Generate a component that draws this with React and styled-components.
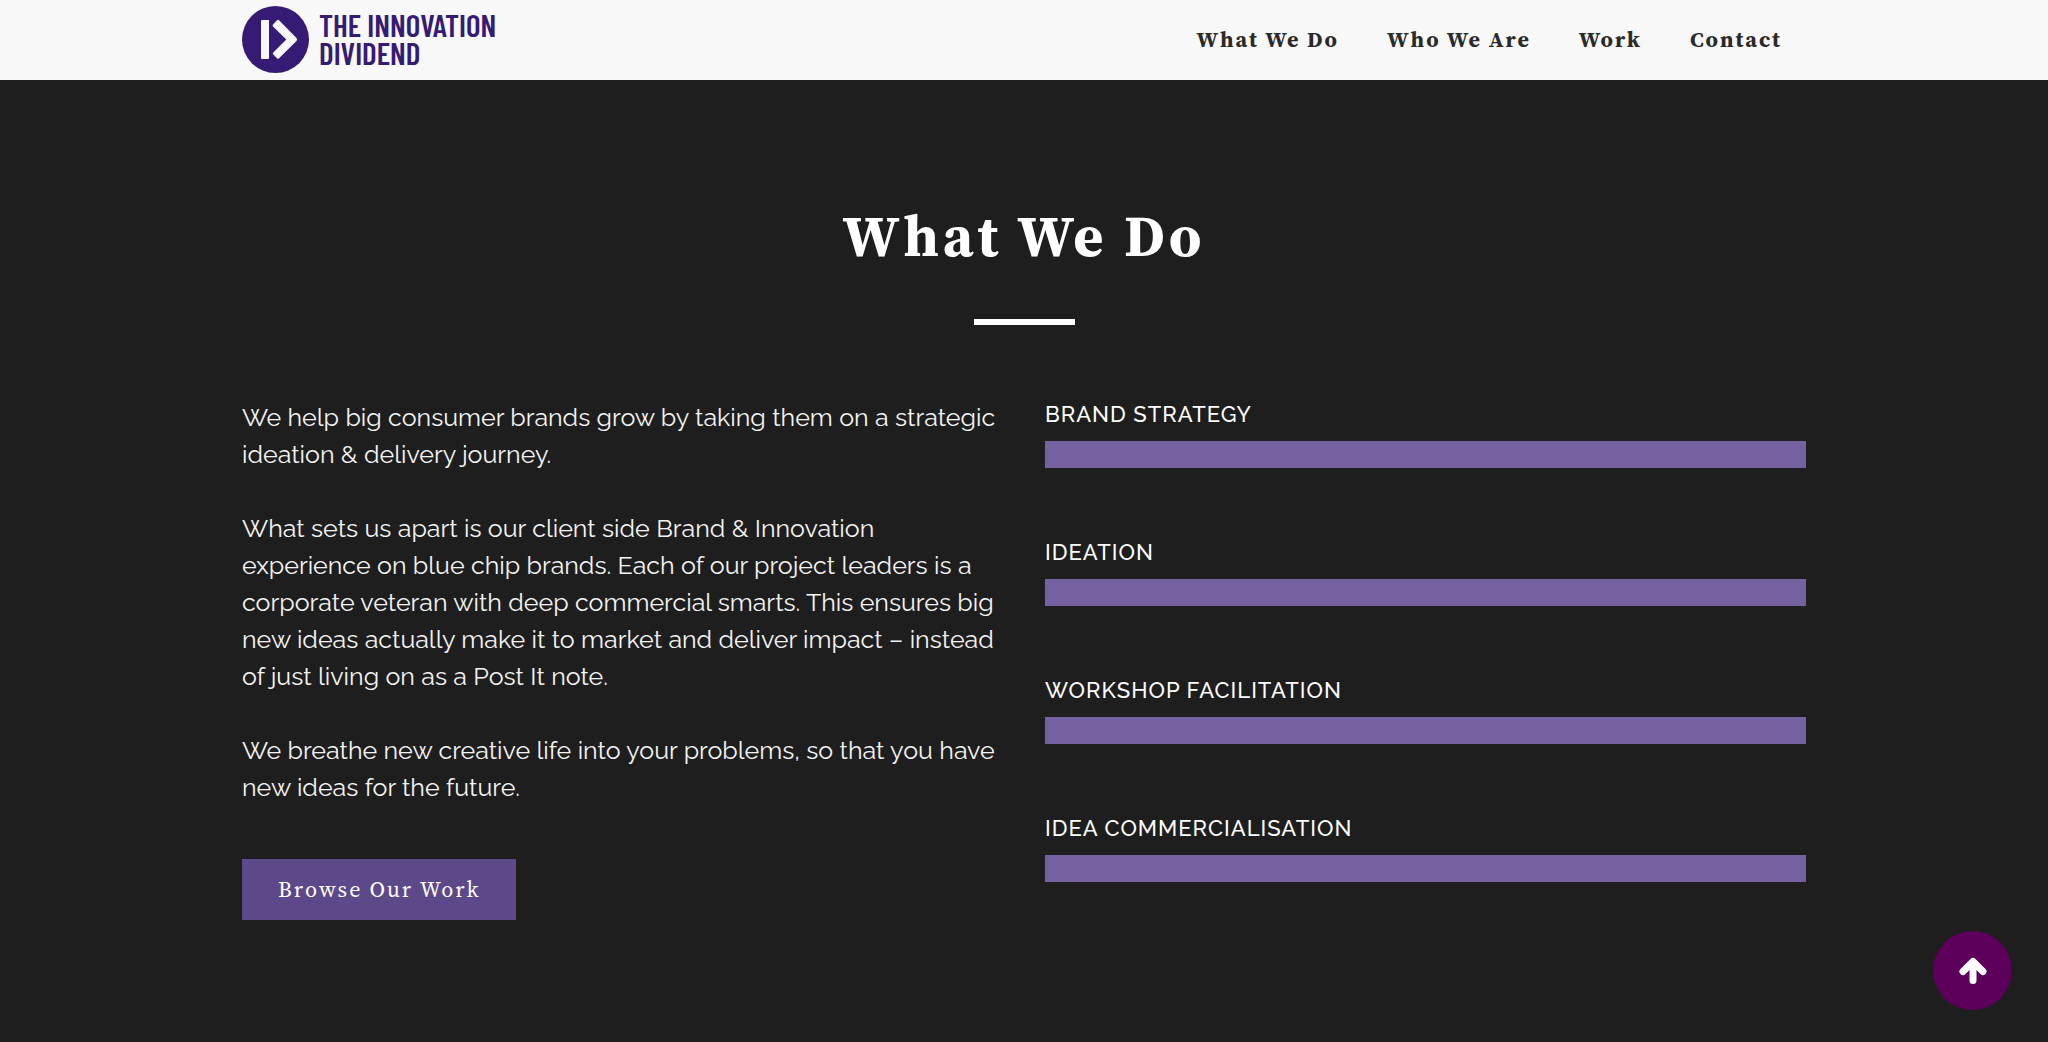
import React from 'react';
import styled, { createGlobalStyle } from 'styled-components';

const GlobalStyle = createGlobalStyle`
  :root {
    --dark: #1e1e1e;
    --light: #f8f8f8;
    --indigo: #361b74;
    --purple: #5d488a;
    --bar: #7560a0;
    --plum: #5c005c;
    --font-serif: 'Source Serif 4', 'Liberation Serif', serif;
    --font-sans: Raleway, Lato, sans-serif;
    --font-narrow: 'Barlow Condensed', 'DejaVu Sans Condensed', sans-serif;
  }

  * {
    box-sizing: border-box;
  }

  body {
    margin: 0;
    background-color: var(--dark);
    color: #fff;
    font-family: var(--font-sans);
  }
`;

const Container = styled.div`
  width: 100%;
  max-width: 1644px;
  margin: 0 auto;
  padding: 0 40px;
`;

const StyledHeader = styled.header`
  background-color: var(--light);
`;

const HeaderInner = styled(Container)`
  display: flex;
  align-items: center;
  justify-content: space-between;
  min-height: 80px;
  padding-bottom: 2px;
`;

const StyledLogo = styled.a`
  display: flex;
  align-items: center;
  gap: 10px;
  color: var(--indigo);
  font-family: var(--font-narrow);
  font-size: 31px;
  font-weight: 600;
  line-height: 28px;
  text-decoration: none;
  text-transform: uppercase;

  svg {
    display: block;
    width: 67px;
    height: 67px;
  }
`;

const StyledNav = styled.nav`
  ul {
    display: flex;
    gap: 48px;
    margin: 0;
    padding: 0 24px 0 0;
    list-style: none;
  }

  a {
    color: #2a2a2a;
    font-family: var(--font-serif);
    font-size: 22px;
    font-weight: 700;
    letter-spacing: 2px;
    text-decoration: none;
  }
`;

const StyledSection = styled.section`
  padding: 120px 0;
`;

const StyledTitle = styled.h2`
  margin: 0;
  font-family: var(--font-serif);
  font-size: 58px;
  font-weight: 700;
  letter-spacing: 4px;
  line-height: 72px;
  text-align: center;
`;

const Divider = styled.hr`
  width: 101px;
  height: 6px;
  margin: 47px auto 74px;
  border: 0;
  background-color: #fff;
`;

const Columns = styled.div`
  display: grid;
  grid-template-columns: 1fr 1fr;
  gap: 42px;

  @media (max-width: 900px) {
    grid-template-columns: 1fr;
  }
`;

const StyledText = styled.div`
  color: #f4f4f4;
  font-size: 25px;
  font-weight: 400;
  line-height: 37px;

  p {
    margin: 0 0 37px;
  }
`;

const StyledButton = styled.a`
  display: inline-block;
  margin-top: 16px;
  padding: 0 36px;
  background-color: var(--purple);
  color: #fff;
  font-family: var(--font-serif);
  font-size: 22px;
  font-weight: 400;
  letter-spacing: 2px;
  line-height: 61px;
  text-decoration: none;
`;

const SkillList = styled.ul`
  display: grid;
  gap: 69px;
  align-content: start;
  margin: 0;
  padding: 0;
  list-style: none;
`;

const Skill = styled.li`
  h3 {
    margin: 0 0 12px;
    font-size: 22px;
    font-weight: 500;
    letter-spacing: 1px;
    line-height: 30px;
    text-transform: uppercase;
  }
`;

const Bar = styled.div`
  height: 27px;
  background-color: var(--bar);
`;

const BackToTop = styled.button`
  display: grid;
  place-items: center;
  position: fixed;
  right: 36px;
  bottom: 32px;
  width: 79px;
  height: 79px;
  padding: 0;
  border: 0;
  border-radius: 50%;
  background-color: var(--plum);
  cursor: pointer;
`;

const navLinks = [
  { name: 'What We Do', url: '#what-we-do' },
  { name: 'Who We Are', url: '#who-we-are' },
  { name: 'Work', url: '#work' },
  { name: 'Contact', url: '#contact' },
];

const skills = ['Brand Strategy', 'Ideation', 'Workshop Facilitation', 'Idea Commercialisation'];

const Header = () => (
  <StyledHeader>
    <HeaderInner>
      <StyledLogo href="#home">
        <svg viewBox="0 0 67 67" aria-hidden="true">
          <circle cx="33.5" cy="33.5" r="33.5" fill="currentColor" />
          <rect x="19" y="14" width="8" height="39" rx="1" fill="#f8f8f8" />
          <path
            d="M31 18.5 L35 14.2 Q36 13.2 37 14.2 L54.5 32 Q55.7 33.5 54.5 35 L37 52.3 Q36 53.3 35 52.3 L31.3 48.5 Q30.3 47.5 31.3 46.5 L44.3 33.5 L31 20.5 Q30 19.5 31 18.5 Z"
            fill="#f8f8f8"
          />
        </svg>
        <span>
          The Innovation
          <br />
          Dividend
        </span>
      </StyledLogo>

      <StyledNav>
        <ul>
          {navLinks.map(({ name, url }) => (
            <li key={url}>
              <a href={url}>{name}</a>
            </li>
          ))}
        </ul>
      </StyledNav>
    </HeaderInner>
  </StyledHeader>
);

const WhatWeDo = () => (
  <StyledSection id="what-we-do">
    <Container>
      <StyledTitle>What We Do</StyledTitle>
      <Divider />

      <Columns>
        <StyledText>
          <p>
            We help big consumer brands grow by taking them on a strategic ideation &amp; delivery
            journey.
          </p>

          <p>
            What sets us apart is our client side Brand &amp; Innovation experience on blue chip
            brands. Each of our project leaders is a corporate veteran with deep commercial smarts.
            This ensures big new ideas actually make it to market and deliver impact – instead of
            just living on as a Post It note.
          </p>

          <p>
            We breathe new creative life into your problems, so that you have new ideas for the
            future.
          </p>

          <StyledButton href="#work">Browse Our Work</StyledButton>
        </StyledText>

        <SkillList>
          {skills.map(skill => (
            <Skill key={skill}>
              <h3>{skill}</h3>
              <Bar />
            </Skill>
          ))}
        </SkillList>
      </Columns>
    </Container>
  </StyledSection>
);

const App = () => (
  <>
    <GlobalStyle />
    <Header />
    <main>
      <WhatWeDo />
    </main>
    <BackToTop type="button" aria-label="Back to top">
      <svg width="28" height="28" viewBox="0 0 28 28" aria-hidden="true">
        <path
          d="M4 14.5 L14 4.5 L24 14.5 M14 6 V23.5"
          fill="none"
          stroke="#fff"
          strokeWidth="7"
          strokeLinecap="round"
          strokeLinejoin="round"
        />
      </svg>
    </BackToTop>
  </>
);

export default App;
